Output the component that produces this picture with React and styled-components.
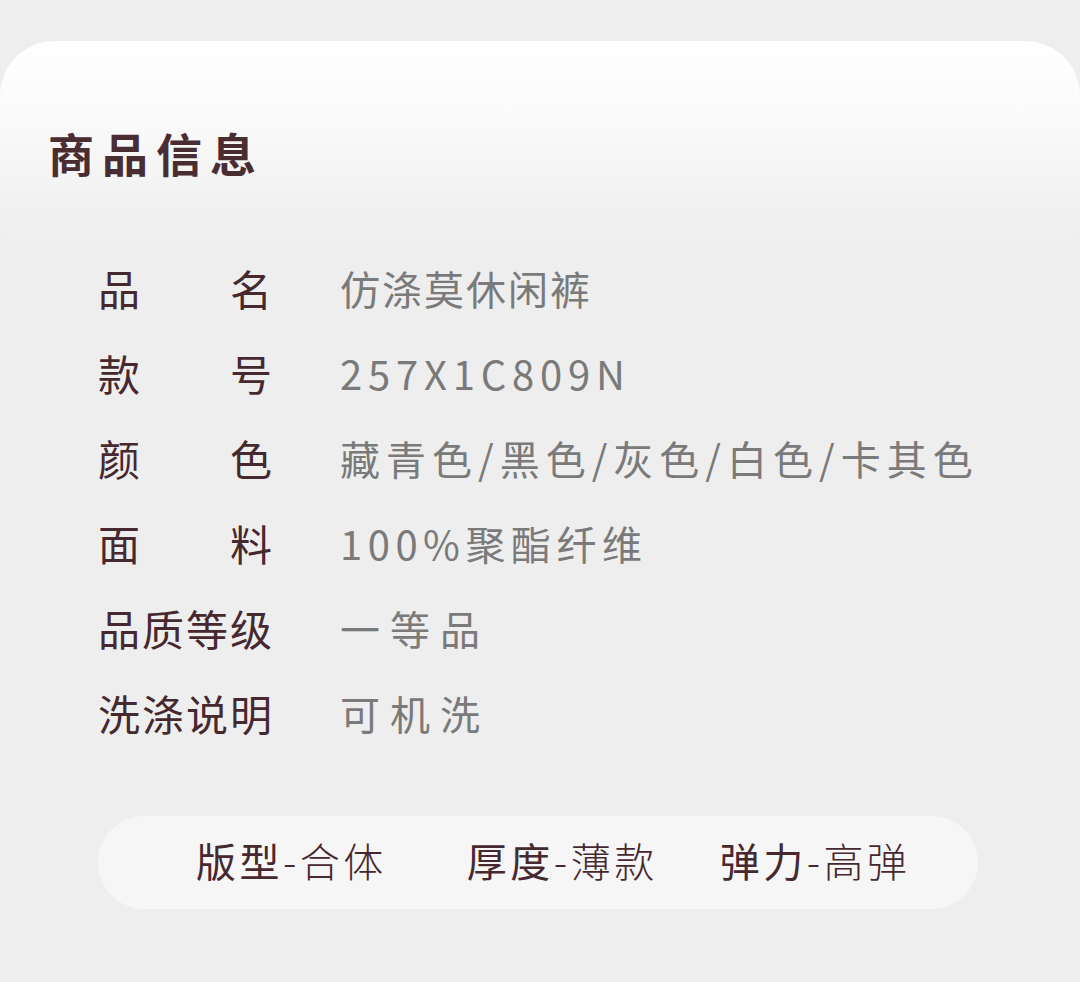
import React from "react";
import styled, { createGlobalStyle } from "styled-components";

const rows = [
  { label: "品名", value: "仿涤莫休闲裤", spacing: 2 },
  { label: "款号", value: "257X1C809N", spacing: 5.8 },
  { label: "颜色", value: "藏青色/黑色/灰色/白色/卡其色", spacing: 6 },
  { label: "面料", value: "100%聚酯纤维", spacing: 5.5 },
  { label: "品质等级", value: "一等品", spacing: 10 },
  { label: "洗涤说明", value: "可机洗", spacing: 10 },
];

const traits = [
  { name: "版型", value: "合体", space: 80 },
  { name: "厚度", value: "薄款", space: 62 },
  { name: "弹力", value: "高弹", space: 0 },
];

const App = () => {
  return (
    <Page>
      <GlobalStyle />
      <HeaderCard>
        <Title>商品信息</Title>
      </HeaderCard>
      <InfoList>
        {rows.map((row) => (
          <InfoRow key={row.label}>
            <Label>{row.label}</Label>
            <Value spacing={row.spacing}>{row.value}</Value>
          </InfoRow>
        ))}
      </InfoList>
      <TraitPill>
        {traits.map((t) => (
          <Trait key={t.name} space={t.space}>
            <TraitName>{t.name}</TraitName>
            <TraitValue>-{t.value}</TraitValue>
          </Trait>
        ))}
      </TraitPill>
    </Page>
  );
};

const GlobalStyle = createGlobalStyle`
  html, body {
    margin: 0;
    padding: 0;
    background: #eeeeee;
  }
  body {
    font-family: "Noto Sans CJK SC", "Noto Sans", sans-serif;
  }
`;

const Page = styled.div`
  width: 1080px;
  min-height: 982px;
  padding-top: 41px;
  box-sizing: border-box;
  background: #eeeeee;
`;

const HeaderCard = styled.div`
  height: 222px;
  box-sizing: border-box;
  padding: 85px 0 0 48px;
  border-radius: 55px 55px 40px 40px;
  background: linear-gradient(180deg, #ffffff 0%, #fafafa 35%, #f1f1f1 75%, #eeeeee 100%);
`;

const Title = styled.h1`
  margin: 0;
  font-size: 46px;
  line-height: 52px;
  font-weight: 700;
  letter-spacing: 8px;
  color: #4a2c33;
`;

const InfoList = styled.div`
  display: flex;
  flex-direction: column;
  gap: 35px;
  padding-left: 98px;
`;

const InfoRow = styled.div`
  display: flex;
  align-items: center;
  gap: 68px;
  height: 50px;
`;

const Label = styled.span`
  width: 174px;
  font-size: 42px;
  line-height: 50px;
  font-weight: 400;
  color: #46282f;
  text-align: justify;
  text-align-last: justify;
`;

const Value = styled.span`
  font-size: 40px;
  line-height: 50px;
  font-weight: 400;
  color: #7a7a7a;
  letter-spacing: ${(p) => p.spacing}px;
`;

const TraitPill = styled.div`
  display: flex;
  align-items: center;
  margin: 78px 0 0 98px;
  padding: 0 0 6px 98px;
  width: 880px;
  height: 93px;
  box-sizing: border-box;
  border-radius: 47px;
  background: #f6f6f6;
`;

const Trait = styled.div`
  display: flex;
  align-items: baseline;
  margin-right: ${(p) => p.space}px;
  font-size: 40px;
  line-height: 50px;
  letter-spacing: 3.5px;
  color: #46282f;
`;

const TraitName = styled.span`
  font-weight: 400;
`;

const TraitValue = styled.span`
  font-weight: 300;
`;

export default App;
